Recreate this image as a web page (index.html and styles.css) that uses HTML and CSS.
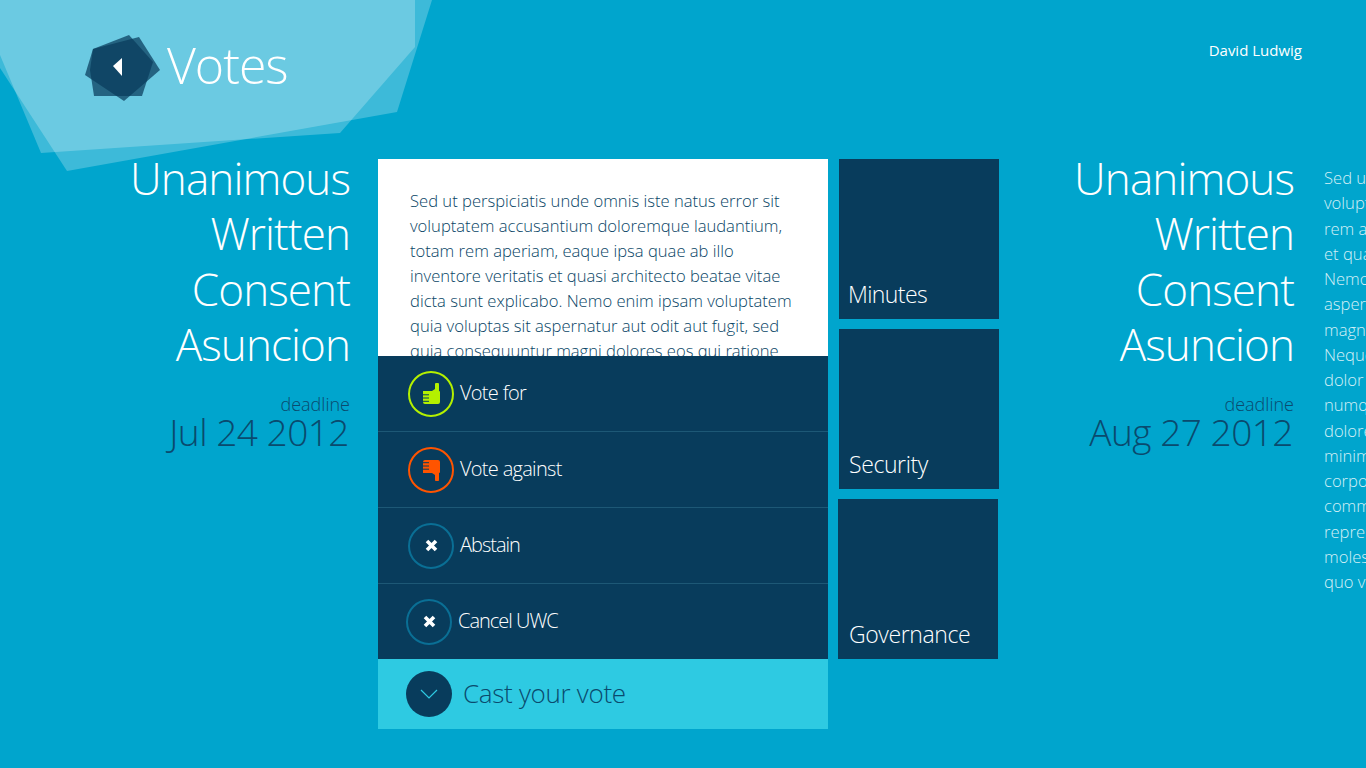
FILE: index.html
```html
<!DOCTYPE html>
<html lang="en">
<head>
    <meta charset="UTF-8">
    <meta name="viewport" content="width=device-width, initial-scale=1.0">
    <title>Votes</title>
    <link rel="stylesheet" href="styles.css">
</head>
<body>
    <svg class="backdrop" width="440" height="175" viewBox="0 0 440 175">
        <polygon points="0,0 432,0 397,112 67,171 0,68" fill="#fff" fill-opacity="0.24"/>
        <polygon points="0,0 415,0 415,47 340,133 41,153 0,55" fill="#fff" fill-opacity="0.24"/>
    </svg>

    <header class="topbar">
        <div class="brand">
            <a class="back" href="#">
                <svg width="76" height="68" viewBox="0 0 76 68">
                    <polygon points="0,41 8,15 54,3 75,36 39,67" fill="#083c5c" fill-opacity="0.72"/>
                    <polygon points="8,15 44,1 68,28 57,62 9,62 5,36" fill="#083c5c" fill-opacity="0.72"/>
                    <polygon points="28,32 37,24 37,42" fill="#fff"/>
                </svg>
            </a>
            <h1 class="page-title">Votes</h1>
        </div>
        <div class="user-name">David Ludwig</div>
    </header>

    <main class="board">
        <section class="summary summary-first">
            <h2 class="summary-title">Unanimous<br>Written<br>Consent<br>Asuncion</h2>
            <div class="deadline-label">deadline</div>
            <div class="deadline-date">Jul 24 2012</div>
        </section>

        <section class="vote-panel">
            <div class="vote-text">
                Sed ut perspiciatis unde omnis iste natus error sit<br>
                voluptatem accusantium doloremque laudantium,<br>
                totam rem aperiam, eaque ipsa quae ab illo<br>
                inventore veritatis et quasi architecto beatae vitae<br>
                dicta sunt explicabo. Nemo enim ipsam voluptatem<br>
                quia voluptas sit aspernatur aut odit aut fugit, sed<br>
                quia consequuntur magni dolores eos qui ratione
            </div>
            <ul class="vote-options">
                <li class="vote-option">
                    <span class="ring ring-for">
                        <svg width="17" height="22" viewBox="0 0 17 22">
                            <path d="M12 1.5a2 2 0 0 1 4 0V8a1 1 0 0 1 1 1v10a2 2 0 0 1-2 2H2a2 2 0 0 1-2-2V8h9l3-2z" fill="#b4f000"/>
                            <path d="M0 11.8h6M0 15h6M0 18.3h6" stroke="#083c5c"/>
                        </svg>
                    </span>
                    <span>Vote for</span>
                </li>
                <li class="vote-option">
                    <span class="ring ring-against">
                        <svg width="17" height="22" viewBox="0 0 17 22">
                            <g transform="matrix(1 0 0 -1 0 22)">
                                <path d="M12 1.5a2 2 0 0 1 4 0V8a1 1 0 0 1 1 1v10a2 2 0 0 1-2 2H2a2 2 0 0 1-2-2V8h9l3-2z" fill="#ff5400"/>
                                <path d="M0 11.8h6M0 15h6M0 18.3h6" stroke="#083c5c"/>
                            </g>
                        </svg>
                    </span>
                    <span>Vote against</span>
                </li>
                <li class="vote-option vote-option-tight">
                    <span class="ring ring-neutral">
                        <svg width="13" height="13" viewBox="0 0 13 13">
                            <path d="M2 2l9 9M11 2l-9 9" stroke="#fff" stroke-width="3.6"/>
                        </svg>
                    </span>
                    <span>Abstain</span>
                </li>
                <li class="vote-option vote-option-tight vote-option-cancel">
                    <span class="ring ring-neutral">
                        <svg width="13" height="13" viewBox="0 0 13 13">
                            <path d="M2 2l9 9M11 2l-9 9" stroke="#fff" stroke-width="3.6"/>
                        </svg>
                    </span>
                    <span>Cancel UWC</span>
                </li>
            </ul>
            <div class="cast-vote">
                <span class="cast-icon">
                    <svg width="18" height="10" viewBox="0 0 18 10">
                        <path d="M1 1l8 8 8-8" fill="none" stroke="#2ecae2" stroke-width="1.2"/>
                    </svg>
                </span>
                <span>Cast your vote</span>
            </div>
        </section>

        <section class="tiles">
            <div class="tile tile-minutes">Minutes</div>
            <div class="tile">Security</div>
            <div class="tile tile-shifted">Governance</div>
        </section>

        <section class="summary summary-second">
            <h2 class="summary-title">Unanimous<br>Written<br>Consent<br>Asuncion</h2>
            <div class="deadline-label">deadline</div>
            <div class="deadline-date">Aug 27 2012</div>
        </section>

        <section class="plain-text">
            Sed ut perspiciatis unde omnis iste natus error sit<br>
            voluptatem accusantium doloremque laudantium, totam<br>
            rem aperiam, eaque ipsa quae ab illo inventore veritatis<br>
            et quasi architecto beatae vitae dicta sunt explicabo.<br>
            Nemo enim ipsam voluptatem quia voluptas sit<br>
            aspernatur aut odit aut fugit, sed quia consequuntur<br>
            magni dolores eos qui ratione voluptatem sequi nesciunt.<br>
            Neque porro quisquam est, qui dolorem ipsum quia<br>
            dolor sit amet, consectetur, adipisci velit, sed quia non<br>
            numquam eius modi tempora incidunt ut labore et<br>
            dolore magnam aliquam quaerat voluptatem. Ut enim ad<br>
            minima veniam, quis nostrum exercitationem ullam<br>
            corporis suscipit laboriosam, nisi ut aliquid ex ea<br>
            commodi consequatur? Quis autem vel eum iure<br>
            reprehenderit qui in ea voluptate velit esse quam nihil<br>
            molestiae consequatur, vel illum qui dolorem eum fugiat<br>
            quo voluptas nulla pariatur?
        </section>
    </main>
</body>
</html>
```

FILE: styles.css
```css
html, body {
    height: 100%;
}

body {
    margin: 0;
    padding: 0;
    overflow: hidden;
    background-color: #00a5cd;
    color: #fff;
    font-family: "Open Sans", "Noto Sans", Arial, sans-serif;
    font-weight: 300;
    position: relative;
}

.backdrop {
    position: absolute;
    left: 0;
    top: 0;
}

.topbar {
    position: relative;
    height: 159px;
    display: flex;
    justify-content: space-between;
    box-sizing: border-box;
    padding: 34px 64px 0 85px;
}

.brand {
    display: flex;
    align-items: flex-start;
}

.back {
    display: block;
    height: 68px;
    margin-right: 6px;
}

.page-title {
    margin: -1px 0 0;
    font-size: 50px;
    font-weight: 300;
    line-height: 64px;
    letter-spacing: -1px;
}

.user-name {
    margin-top: 6px;
    font-size: 15px;
    font-weight: 400;
    line-height: 20px;
}

.board {
    position: relative;
    display: flex;
    align-items: flex-start;
    width: 1800px;
}

.summary {
    flex: none;
    text-align: right;
}

.summary-first {
    width: 350px;
    margin-right: 28px;
}

.summary-second {
    width: 295px;
    margin-right: 30px;
}

.summary-title {
    margin: -8px 0 0;
    font-size: 44px;
    font-weight: 300;
    line-height: 55.3px;
    letter-spacing: -0.9px;
}

.deadline-label {
    margin-top: 21px;
    color: #0a4a6e;
    font-size: 18px;
    line-height: 22px;
}

.deadline-date {
    margin-top: -1px;
    padding-right: 1px;
    color: #0a4a6e;
    font-size: 37px;
    line-height: 36px;
    letter-spacing: -0.5px;
}

.vote-panel {
    flex: none;
    width: 450px;
    margin-right: 11px;
}

.vote-text {
    height: 197px;
    box-sizing: border-box;
    overflow: hidden;
    padding: 28.6px 0 0 32px;
    background-color: #fff;
    color: #084566;
    font-size: 16.6px;
    line-height: 25.1px;
    white-space: nowrap;
}

.vote-options {
    margin: 0;
    padding: 0;
    list-style: none;
    background-color: #083c5c;
}

.vote-option {
    display: flex;
    align-items: center;
    gap: 6px;
    height: 76px;
    box-sizing: border-box;
    padding-left: 30px;
    border-bottom: 1px solid #1d5876;
    font-size: 20px;
    letter-spacing: -0.7px;
}

.vote-option span:last-child {
    margin-top: -2px;
}

.vote-option-tight {
    letter-spacing: -1px;
}

.vote-option-cancel {
    height: 75px;
    padding-left: 28px;
    border-bottom: 0;
}

.ring {
    display: flex;
    align-items: center;
    justify-content: center;
    width: 46px;
    height: 46px;
    box-sizing: border-box;
    border-radius: 50%;
    border: 2px solid #0a6f95;
}

.ring-for {
    border-color: #b4f000;
}

.ring-against {
    border-color: #ff5400;
}

.cast-vote {
    display: flex;
    align-items: center;
    gap: 11px;
    height: 70px;
    padding-left: 28px;
    background-color: #2ecae2;
    color: #0a4a6e;
    font-size: 26px;
    letter-spacing: -0.3px;
}

.cast-vote span:last-child {
    margin-top: -2px;
}

.cast-icon {
    display: flex;
    align-items: center;
    justify-content: center;
    width: 46px;
    height: 46px;
    border-radius: 50%;
    background-color: #083c5c;
}

.tiles {
    flex: none;
    display: flex;
    flex-direction: column;
    gap: 10px;
    width: 160px;
}

.tile {
    display: flex;
    align-items: flex-end;
    width: 160px;
    height: 160px;
    box-sizing: border-box;
    padding: 0 0 9px 10px;
    background-color: #083c5c;
    font-size: 23px;
    letter-spacing: -0.4px;
}

.tile-minutes {
    padding-left: 9px;
    letter-spacing: -0.6px;
}

.tile-shifted {
    margin-left: -1px;
    padding-left: 11px;
}

.plain-text {
    flex: none;
    padding-top: 6px;
    color: #d4f0f7;
    font-size: 16.6px;
    line-height: 25.25px;
    white-space: nowrap;
}
```
